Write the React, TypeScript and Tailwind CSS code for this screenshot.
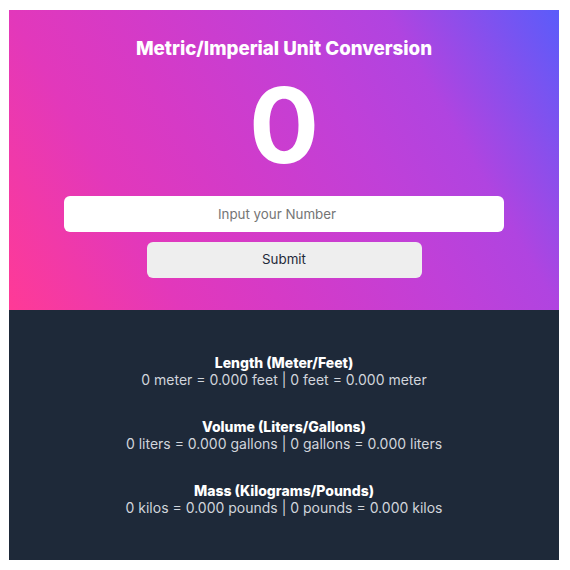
import React, { useState } from "react";

export default function App() {
  const [value, setValue] = useState("");
  const [n, setN] = useState(0);
  const f = "font-['Inter','Liberation_Sans',sans-serif]";
  return (
    <div className={`w-full bg-white pt-[10px] pb-[10px] ${f}`}>
      <div className="ml-[9px] w-[550px]">
        <div className="flex h-[300px] flex-col items-center bg-[linear-gradient(60deg,#ff3a96_0%,#e238bb_24%,#d63ac6_38%,#c040d8_62%,#b044e0_76%,#5a5cfa_100%)]">
          <h1 className="mt-[25px] text-[18.72px] leading-7 font-extrabold text-white">Metric/Imperial Unit Conversion</h1>
          <div className="mt-[10px] text-[104px] leading-none font-bold text-white">{n}</div>
          <input
            value={value}
            onChange={(e) => setValue(e.target.value)}
            placeholder="Input your Number"
            className="mt-[19px] h-9 w-[440px] rounded-md bg-white pr-[14px] text-center text-[13.33px] text-gray-800 outline-none placeholder:text-[#757575]"
          />
          <button
            onClick={() => setN(Number(value) || 0)}
            className="mt-[10px] h-9 w-[275px] rounded-md bg-[#eeeeee] text-[13.33px] text-gray-800"
          >
            Submit
          </button>
        </div>
        <div className="flex h-[250px] flex-col items-center justify-center gap-[30px] bg-gray-800 text-center text-sm leading-[17px]">
          <div>
            <div className="font-extrabold text-white">Length (Meter/Feet)</div>
            <div className="text-gray-300">0 meter = 0.000 feet | 0 feet = 0.000 meter</div>
          </div>
          <div>
            <div className="font-extrabold text-white">Volume (Liters/Gallons)</div>
            <div className="text-gray-300">0 liters = 0.000 gallons | 0 gallons = 0.000 liters</div>
          </div>
          <div>
            <div className="font-extrabold text-white">Mass (Kilograms/Pounds)</div>
            <div className="text-gray-300">0 kilos = 0.000 pounds | 0 pounds = 0.000 kilos</div>
          </div>
        </div>
      </div>
    </div>
  );
}
